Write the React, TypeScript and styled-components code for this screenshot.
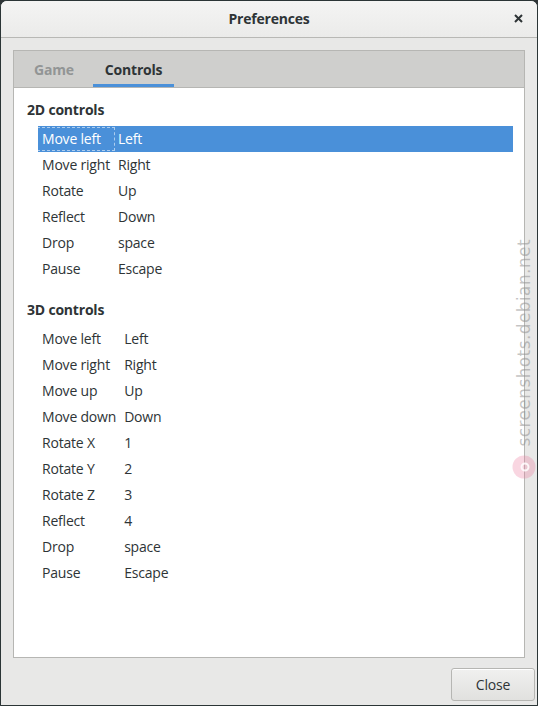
import React from "react";
import styled, { createGlobalStyle } from "styled-components";

type Binding = { action: string; key: string };

const controls2d: Binding[] = [
  { action: "Move left", key: "Left" },
  { action: "Move right", key: "Right" },
  { action: "Rotate", key: "Up" },
  { action: "Reflect", key: "Down" },
  { action: "Drop", key: "space" },
  { action: "Pause", key: "Escape" },
];

const controls3d: Binding[] = [
  { action: "Move left", key: "Left" },
  { action: "Move right", key: "Right" },
  { action: "Move up", key: "Up" },
  { action: "Move down", key: "Down" },
  { action: "Rotate X", key: "1" },
  { action: "Rotate Y", key: "2" },
  { action: "Rotate Z", key: "3" },
  { action: "Reflect", key: "4" },
  { action: "Drop", key: "space" },
  { action: "Pause", key: "Escape" },
];

const GlobalStyle = createGlobalStyle`
  html, body {
    margin: 0;
    padding: 0;
    background: #2e3436;
  }
  body {
    font-family: "Open Sans", "Noto Sans", sans-serif;
    font-size: 14px;
    letter-spacing: -0.2px;
    color: #2e3436;
  }
`;

const Window = styled.div`
  position: relative;
  width: 538px;
  height: 706px;
  box-sizing: border-box;
  display: flex;
  flex-direction: column;
  background: #e8e8e7;
  border: 1px solid #2b3536;
  border-radius: 7px 7px 0 0;
  overflow: hidden;
`;

const TitleBar = styled.header`
  height: 36px;
  flex-shrink: 0;
  display: grid;
  grid-template-columns: 40px 1fr 40px;
  align-items: center;
  background: linear-gradient(#f4f4f3, #ebebea);
  border-bottom: 1px solid #b8b8b5;
`;

const Title = styled.h1`
  grid-column: 2;
  margin: 0 0 2px;
  text-align: center;
  font-size: 14px;
  font-weight: 700;
  color: #2e3436;
`;

const CloseX = styled.svg`
  justify-self: center;
  margin: 0 0 1px 2px;
`;

const Body = styled.div`
  flex: 1;
  display: flex;
  flex-direction: column;
  padding: 12px 12px 0 12px;
  min-height: 0;
`;

const Notebook = styled.div`
  flex: 1;
  display: flex;
  flex-direction: column;
  border: 1px solid #b6b6b3;
  background: #fff;
`;

const TabBar = styled.div`
  height: 36px;
  display: flex;
  padding-left: 20px;
  gap: 19px;
  background: #cfcfcd;
  border-bottom: 1px solid #b6b6b3;
`;

const Tab = styled.div<{ $active?: boolean }>`
  display: flex;
  align-items: center;
  padding: 0 ${(p) => (p.$active ? "12px" : "0")};
  font-weight: 700;
  color: ${(p) => (p.$active ? "#2e3436" : "#929595")};
  box-shadow: ${(p) => (p.$active ? "inset 0 -3px 0 #4a90d9" : "none")};
`;

const Content = styled.div`
  flex: 1;
  padding: 12px 11px 0 24px;
  display: flex;
  flex-direction: column;
  gap: 18px;
`;

const Section = styled.section`
  display: flex;
  flex-direction: column;
  gap: 6px;
`;

const Heading = styled.h2`
  margin: 0 0 0 -11px;
  font-size: 14px;
  line-height: 20px;
  font-weight: 700;
`;

const Table = styled.div`
  display: grid;
  grid-template-columns: auto 1fr;
`;

const Row = styled.div<{ $selected?: boolean }>`
  grid-column: 1 / -1;
  display: grid;
  grid-template-columns: subgrid;
  height: 26px;
  align-items: center;
  line-height: 18px;
  padding-bottom: 1px;
  box-sizing: border-box;
  background: ${(p) => (p.$selected ? "#4a90d9" : "transparent")};
  color: ${(p) => (p.$selected ? "#fff" : "#2e3436")};
`;

const Cell = styled.span<{ $focused?: boolean }>`
  padding: 2px 4px;
  white-space: nowrap;
  outline: ${(p) => (p.$focused ? "1px dashed rgba(255,255,255,0.55)" : "none")};
`;

const KeyCell = styled.span`
  padding: 0 4px;
  white-space: nowrap;
`;

const Footer = styled.div`
  height: 47px;
  flex-shrink: 0;
  display: flex;
  justify-content: flex-end;
  align-items: flex-start;
  padding: 10px 2px 0 0;
  box-sizing: border-box;
`;

const Button = styled.button`
  width: 84px;
  height: 33px;
  font-family: inherit;
  font-size: 14px;
  letter-spacing: inherit;
  color: #2e3436;
  border: 1px solid #b6b6b3;
  border-radius: 3px;
  background: linear-gradient(#f0f0ef, #e1e1df);
  box-shadow: inset 0 1px #fff;
`;

const Watermark = styled.div`
  position: absolute;
  right: 0;
  top: 238px;
  width: 26px;
  display: flex;
  flex-direction: column;
  align-items: center;
  gap: 8px;
  pointer-events: none;
`;

const WatermarkText = styled.span`
  writing-mode: vertical-rl;
  transform: rotate(180deg);
  font-family: "DejaVu Sans", sans-serif;
  font-size: 17px;
  letter-spacing: 0.4px;
  color: rgba(145, 145, 145, 0.55);
`;

const Bindings = ({ title, items, selected }: { title: string; items: Binding[]; selected?: number }) => (
  <Section>
    <Heading>{title}</Heading>
    <Table>
      {items.map((b, i) => (
        <Row key={b.action} $selected={i === selected}>
          <Cell $focused={i === selected}>{b.action}</Cell>
          <KeyCell>{b.key}</KeyCell>
        </Row>
      ))}
    </Table>
  </Section>
);

export default function App() {
  return (
    <>
      <GlobalStyle />
      <Window>
        <TitleBar>
          <Title>Preferences</Title>
          <CloseX width="9" height="9" viewBox="0 0 9 9">
            <path d="M1 1L8 8M8 1L1 8" stroke="#2e3436" strokeWidth="2" />
          </CloseX>
        </TitleBar>
        <Body>
          <Notebook>
            <TabBar>
              <Tab>Game</Tab>
              <Tab $active>Controls</Tab>
            </TabBar>
            <Content>
              <Bindings title="2D controls" items={controls2d} selected={0} />
              <Bindings title="3D controls" items={controls3d} />
            </Content>
          </Notebook>
        </Body>
        <Footer>
          <Button>Close</Button>
        </Footer>
        <Watermark>
          <WatermarkText>screenshots.debian.net</WatermarkText>
          <svg width="24" height="24" viewBox="0 0 24 24">
            <circle cx="12" cy="12" r="11.5" fill="rgba(235,120,155,0.3)" />
            <circle cx="13" cy="12" r="3.5" fill="none" stroke="rgba(255,255,255,0.85)" strokeWidth="2" />
          </svg>
        </Watermark>
      </Window>
    </>
  );
}
